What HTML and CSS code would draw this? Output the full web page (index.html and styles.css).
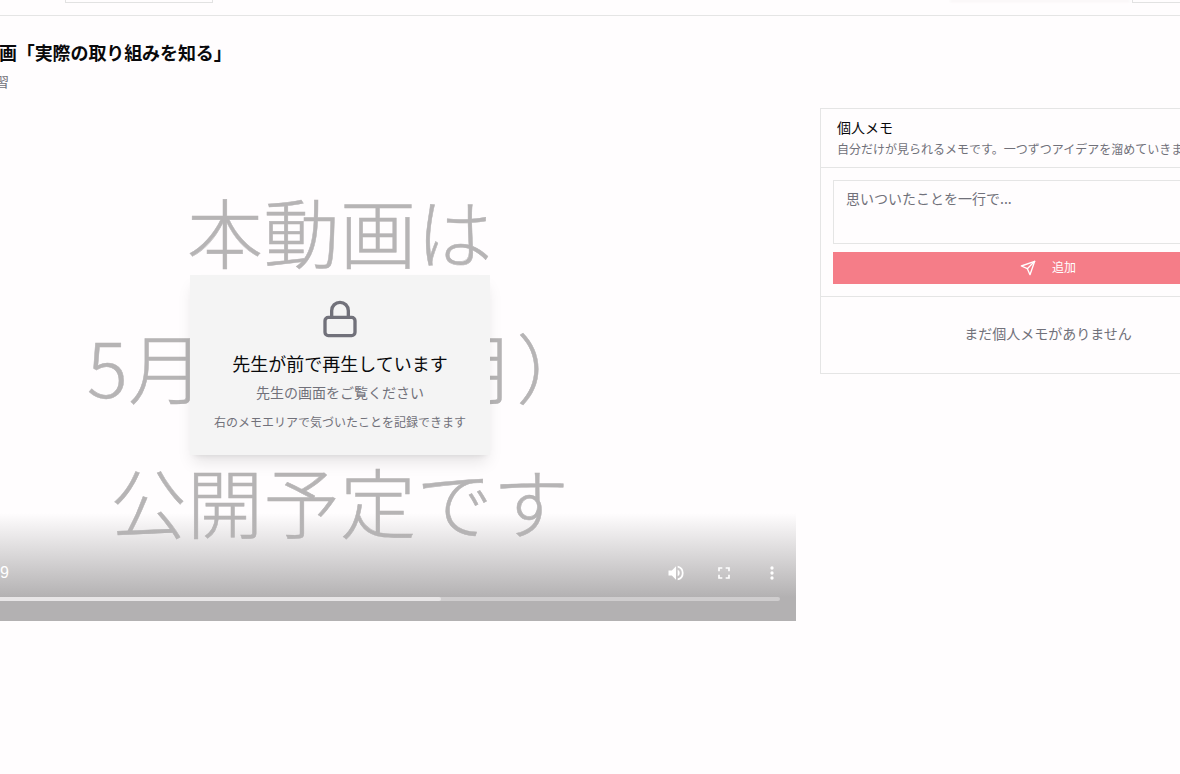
FILE: index.html
```html
<!DOCTYPE html>
<html lang="ja">
<head>
<meta charset="utf-8">
<title>動画</title>
<link rel="stylesheet" href="styles.css">
</head>
<body>
<header class="topbar">
  <div class="topbar-box topbar-box-left"></div>
  <div class="topbar-glow"></div>
  <div class="topbar-box topbar-box-right"></div>
</header>
<main class="page">
  <div class="heading">
    <h1 class="title">動画「実際の取り組みを知る」</h1>
    <p class="subtitle">学習</p>
  </div>
  <div class="columns">
    <section class="video">
      <div class="poster">
        <div class="poster-line">本動画は</div>
        <div class="poster-line">5月12日（月）</div>
        <div class="poster-line">公開予定です</div>
      </div>
      <div class="controls">
        <div class="control-row">
          <span class="time">3:12 / 5:19</span>
          <svg class="control-icon" viewBox="0 0 24 24"><path d="M3 9v6h4l5 5V4L7 9H3z"/><path d="M14 7.97v8.05A4.5 4.5 0 0 0 16.5 12 4.5 4.5 0 0 0 14 7.97z"/><path d="M14 3.2v2.1a7 7 0 0 1 0 13.4v2.1a9 9 0 0 0 0-17.6z"/></svg>
          <svg class="control-icon" viewBox="0 0 24 24"><path d="M7 14H5v5h5v-2H7v-3zm-2-4h2V7h3V5H5v5zm12 7h-3v2h5v-5h-2v3zM14 5v2h3v3h2V5h-5z"/></svg>
          <svg class="control-icon" viewBox="0 0 24 24"><circle cx="12" cy="6" r="2"/><circle cx="12" cy="12" r="2"/><circle cx="12" cy="18" r="2"/></svg>
        </div>
        <div class="progress"><div class="progress-fill"></div></div>
      </div>
      <div class="lock-card">
        <svg class="lock-icon" viewBox="0 0 24 24"><rect x="3" y="11" width="18" height="11" rx="2"/><path d="M7 11V7a5 5 0 0 1 10 0v4"/></svg>
        <p class="lock-title">先生が前で再生しています</p>
        <p class="lock-sub">先生の画面をご覧ください</p>
        <p class="lock-note">右のメモエリアで気づいたことを記録できます</p>
      </div>
    </section>
    <aside class="memo">
      <div class="memo-head">
        <div class="memo-title">個人メモ</div>
        <div class="memo-desc">自分だけが見られるメモです。一つずつアイデアを溜めていきましょう</div>
      </div>
      <div class="memo-form">
        <div class="memo-input">思いついたことを一行で...</div>
        <button class="memo-button" type="button">
          <svg class="send-icon" viewBox="0 0 24 24"><path d="m22 2-7 20-4-9-9-4z"/><path d="M22 2 11 13"/></svg>
          <span class="memo-button-label">追加</span>
        </button>
      </div>
      <div class="memo-empty">まだ個人メモがありません</div>
    </aside>
  </div>
</main>
</body>
</html>
```
FILE: styles.css
```css
* { box-sizing: border-box; }
html, body { margin: 0; height: 100%; }
body {
  width: 1180px;
  height: 774px;
  overflow: hidden;
  background: #fffdfe;
  color: #09090b;
  font-family: "Noto Sans CJK JP", "Noto Sans", sans-serif;
}
.topbar {
  height: 16px;
  border-bottom: 1px solid #e5e5e5;
  display: flex;
  align-items: flex-start;
}
.topbar-box {
  flex: none;
  height: 3px;
  border: 1px solid #e2e2e2;
  border-top: 0;
  background: #fffdfe;
}
.topbar-box-left { width: 148px; margin-left: 65px; }
.topbar-glow {
  flex: none;
  width: 180px;
  height: 2px;
  margin-left: 737px;
  background: #f8f6f6;
  filter: blur(1px);
}
.topbar-box-right { width: 60px; margin-left: 2px; }
.page {
  width: 1392px;
  margin-left: -116px;
}
.heading { padding: 22px 0 0 97px; height: 92px; }
.title {
  margin: 0;
  font-size: 18px;
  font-weight: 700;
  line-height: 28px;
  letter-spacing: -0.1px;
  color: #09090b;
}
.subtitle {
  margin: 5px 0 0;
  font-size: 14px;
  line-height: 20px;
  color: #71717a;
}
.columns {
  display: grid;
  grid-template-columns: 912px 456px;
  gap: 24px;
  align-items: start;
}
.video {
  position: relative;
  height: 513px;
  overflow: hidden;
  background: #fffdfe;
}
.poster {
  display: flex;
  flex-direction: column;
  align-items: center;
  padding-top: 55px;
}
.poster-line {
  font-size: 76px;
  line-height: 135px;
  letter-spacing: 0.5px;
  font-weight: 300;
  color: #b6b4b5;
  -webkit-text-stroke: 0.5px #b6b4b5;
  white-space: nowrap;
}
.controls {
  position: absolute;
  left: 0;
  right: 0;
  bottom: 0;
  height: 108px;
  padding: 0 16px;
  display: flex;
  flex-direction: column;
  justify-content: flex-end;
  background: linear-gradient(to bottom, rgba(179,177,178,0) 0%, #b3b1b2 78%);
}
.control-row {
  display: flex;
  align-items: center;
  height: 48px;
}
.time {
  width: 109px;
  margin-right: auto;
  text-align: right;
  font-family: "Liberation Sans", Roboto, sans-serif;
  font-size: 16px;
  color: #fff;
  white-space: nowrap;
}
.control-icon {
  width: 20px;
  height: 20px;
  margin: 0 -2px 0 30px;
  fill: #fff;
}
.progress {
  height: 4px;
  margin-bottom: 20px;
  border-radius: 2px;
  background: #cfcdce;
}
.progress-fill {
  width: 61.5%;
  height: 100%;
  border-radius: 2px;
  background: #e8e6e7;
}
.lock-card {
  position: absolute;
  left: 306px;
  top: 167px;
  width: 300px;
  height: 180px;
  padding-top: 24px;
  display: flex;
  flex-direction: column;
  align-items: center;
  background: #f4f4f4;
  box-shadow: 0 10px 15px -3px rgba(0,0,0,.1), 0 4px 6px -4px rgba(0,0,0,.1);
}
.lock-icon {
  width: 40px;
  height: 40px;
  fill: none;
  stroke: #71717a;
  stroke-width: 2;
  stroke-linecap: round;
  stroke-linejoin: round;
}
.lock-title {
  margin: 10px 0 0;
  font-size: 18px;
  line-height: 28px;
}
.lock-sub {
  margin: 5px 0 0;
  font-size: 14px;
  line-height: 20px;
  color: #71717a;
}
.lock-note {
  margin: 10px 0 0;
  font-size: 12px;
  line-height: 20px;
  color: #71717a;
}
.memo {
  border: 1px solid #e5e5e5;
  background: #fffdfe;
}
.memo-head {
  height: 59px;
  padding: 8px 16px 0;
  border-bottom: 1px solid #e5e5e5;
}
.memo-title {
  font-size: 14px;
  line-height: 20px;
}
.memo-desc {
  margin-top: 3px;
  font-size: 12px;
  line-height: 18px;
  color: #71717a;
  white-space: nowrap;
}
.memo-form {
  height: 129px;
  padding: 12px 12px 0;
  border-bottom: 1px solid #e5e5e5;
}
.memo-input {
  height: 64px;
  padding: 7px 12px;
  border: 1px solid #e5e5e5;
  font-size: 14px;
  line-height: 20px;
  color: #71717a;
}
.memo-button {
  width: 100%;
  height: 32px;
  margin-top: 8px;
  padding: 0;
  border: 0;
  display: flex;
  align-items: center;
  justify-content: center;
  gap: 16px;
  background: #f57d88;
  color: #fff;
  font-family: inherit;
  font-size: 12px;
}
.send-icon {
  width: 16px;
  height: 16px;
  fill: none;
  stroke: #fff;
  stroke-width: 2;
  stroke-linecap: round;
  stroke-linejoin: round;
}
.memo-button-label {
  padding-bottom: 3px;
}
.memo-empty {
  height: 76px;
  padding-bottom: 4px;
  display: flex;
  align-items: center;
  justify-content: center;
  font-size: 14px;
  color: #71717a;
}
```
